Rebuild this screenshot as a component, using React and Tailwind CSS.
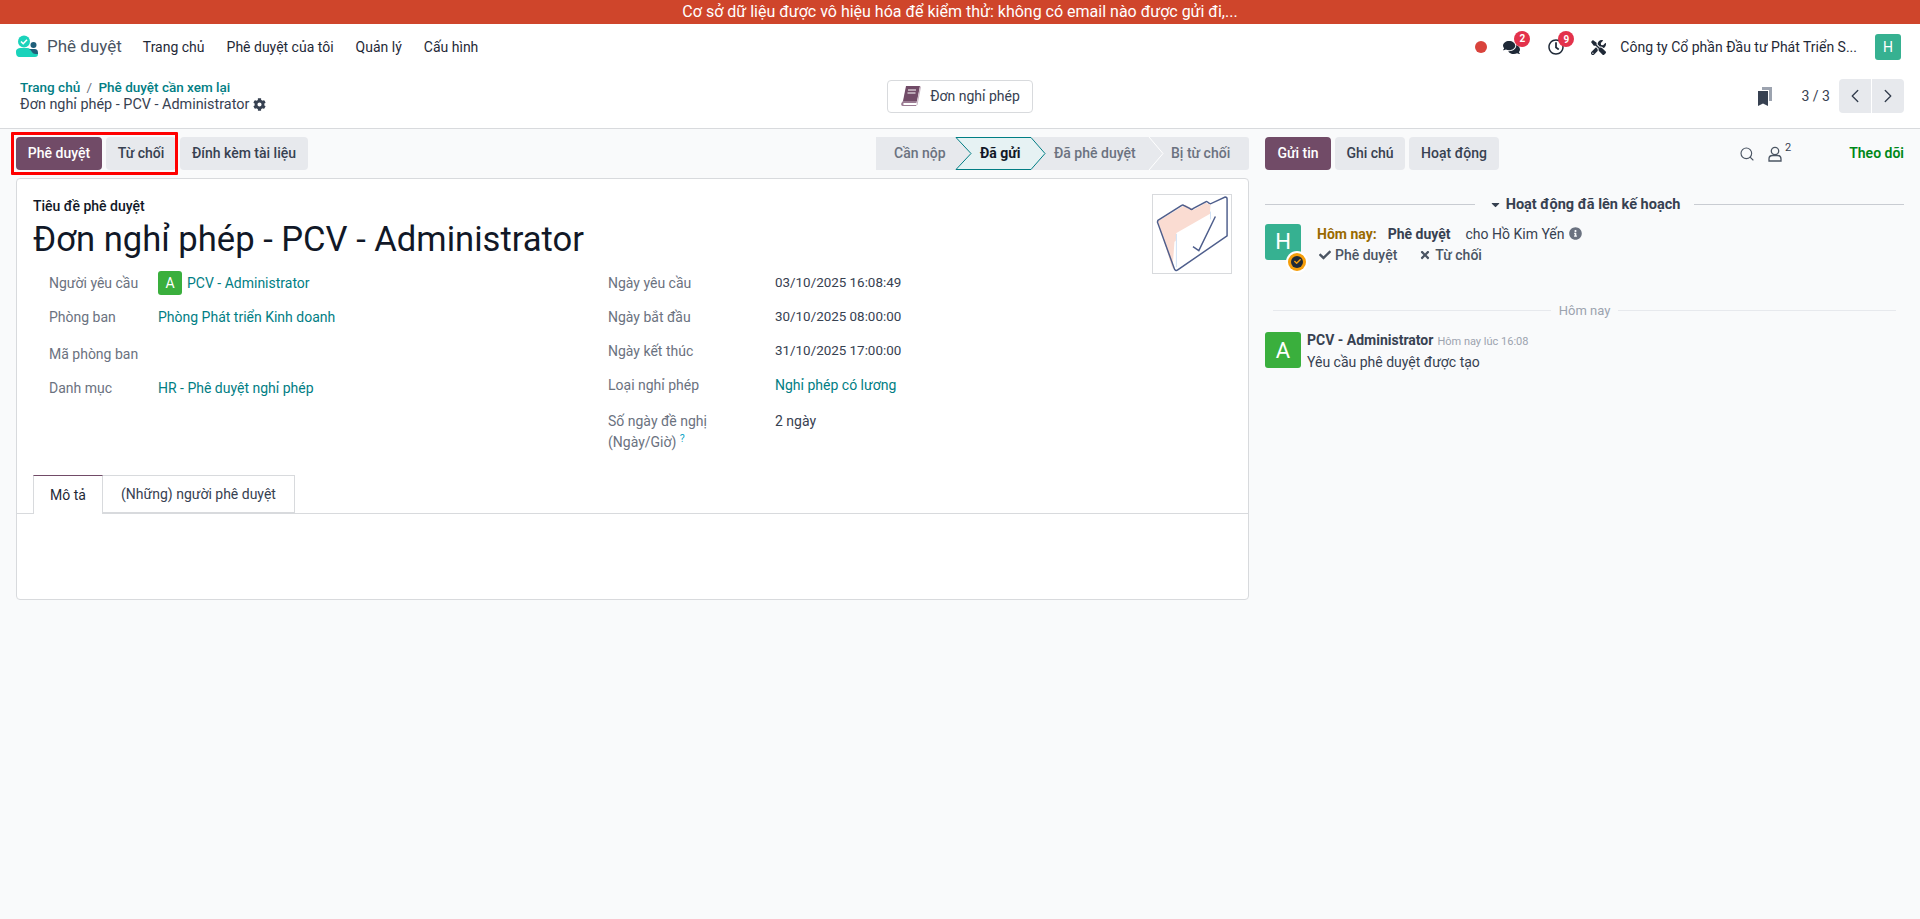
import { FaComments, FaRegClock, FaTools, FaCog, FaCheck, FaTimes, FaInfoCircle, FaCaretDown } from 'react-icons/fa';
import { ChevronLeft, ChevronRight, Search } from 'lucide-react';

const Logo = () => (
  <svg width="24" height="24" viewBox="0 0 24 24" className="shrink-0">
    <path d="M1 17c0-3 2-4 5-4h6c3 0 4 2 5 3 1 2 3 2 6 2v1c0 2-1 3-3 3H5c-3 0-4-2-4-5z" fill="#1ad3bb" />
    <path d="M14 14h5c3 0 4 1 4 4v1c-3 0-5 0-6-2-1-1-1-2-3-3z" fill="#1f5f7a" />
    <circle cx="18.5" cy="10" r="3" fill="#1f5f7a" />
    <circle cx="9" cy="6.5" r="6" fill="#1ad3bb" />
    <path d="M6 6.5l2.2 2.2L12 4.8" fill="none" stroke="#fff" strokeWidth="1.6" />
  </svg>
);

const BookIcon = () => (
  <svg width="22" height="22" viewBox="0 0 22 22">
    <path d="M6 1h14l-3 15H3z" fill="#714b67" />
    <path d="M3 16h14l-.6 2H4c-1 0-1 2 0 2h12.5l-.4 1H3c-2 0-2-2-1.600-3z" fill="#9b7c93" />
    <path d="M20 1l1 1-3.500 18h-1l3-16z" fill="#c9b8c4" />
    <path d="M8 5h8M7.500 8h8" stroke="#fff" strokeWidth="1.200" />
  </svg>
);

const Bookmarks = () => (
  <svg width="14" height="19" viewBox="0 0 14 19">
    <path d="M4 0h10v14H11V3H4z" fill="#9ca3af" />
    <path d="M0 4h10v15l-5-2.500L0 19z" fill="#374151" />
  </svg>
);

const FolderImg = () => (
  <svg width="76" height="76" viewBox="0 0 78 78">
    <path d="M4 26l28-17 9 5 12-7 5 2-1 17-36 21-2 28z" fill="#fadcd2" />
    <path d="M23 38l35-20 0-4 14-8c2-1 3 0 3 2v36L24 76c-2 1-3 0-4-2z" fill="#fff" />
    <path d="M4 25L28 10c1-1 2-1 3 0l6 3c1 1 2 1 3 0l13-7c1-1 2 0 3 1l2 1 15-7c1 0 2 0 2 2v38L24 76c-1 1-3 0-3-1L4 28c-1-1 0-2 0-3z" fill="none" stroke="#4e5e8c" strokeWidth="1.500" />
    <path d="M40 52l6 4 17-35" fill="none" stroke="#4e5e8c" strokeWidth="1.500" />
    <path d="M23 39v34M58 16v8" stroke="#cfe0f5" strokeWidth="1" />
  </svg>
);

const UserOutline = () => (
  <svg width="14" height="16" viewBox="0 0 14 16" fill="none" stroke="#4b5563" strokeWidth="1.300">
    <circle cx="7" cy="5" r="3.700" />
    <path d="M1 15v-2c0-2 1.500-3.500 3.500-3.500h5c2 0 3.500 1.500 3.500 3.500v2z" />
  </svg>
);

const Avatar = ({ letter, color, size }) => (
  <div className={`flex shrink-0 items-center justify-center rounded-[3px] text-white ${color} ${size}`}>
    {letter}
  </div>
);

const Badge = ({ count }) => (
  <span className="absolute -top-[8px] -right-[10px] flex h-[16px] w-[16px] items-center justify-center rounded-full bg-[#e3324b] text-[10px] font-bold text-white">
    {count}
  </span>
);

const Field = ({ label, height, children }) => (
  <div className={`flex items-center ${height}`}>
    <div className="w-[109px] shrink-0 text-[#6b7280]">{label}</div>
    {children}
  </div>
);

const DateField = ({ label, height, children }) => (
  <div className={`flex items-center ${height}`}>
    <div className="w-[167px] shrink-0 text-[#6b7280]">{label}</div>
    {children}
  </div>
);

const App = () => {
  return (
    <div className="flex h-[919px] flex-col overflow-hidden bg-[#f9fafb] font-['Roboto','Liberation_Sans',sans-serif] text-[14px] text-[#374151]">
      <div className="flex h-[24px] shrink-0 items-center justify-center bg-[#cf452b] text-[16px] text-white">
        Cơ sở dữ liệu được vô hiệu hóa để kiểm thử: không có email nào được gửi đi,...
      </div>

      <nav className="flex h-[46px] shrink-0 items-center bg-white pl-[15px] pr-[19px]">
        <Logo />
        <span className="ml-[8px] text-[17px] text-[#4b5563]">Phê duyệt</span>
        <div className="ml-[21px] flex gap-[22px] text-[#1f2937]">
          <span>Trang chủ</span>
          <span>Phê duyệt của tôi</span>
          <span>Quản lý</span>
          <span>Cấu hình</span>
        </div>
        <div className="ml-auto flex items-center">
          <span className="h-[12px] w-[12px] rounded-full bg-[#d9433c]" />
          <span className="relative ml-[16px] text-[#1f2937]">
            <FaComments size={17} />
            <Badge count="2" />
          </span>
          <span className="relative ml-[28px] text-[#1f2937]">
            <FaRegClock size={16} />
            <Badge count="9" />
          </span>
          <span className="ml-[27px] text-[#1f2937]"><FaTools size={15} /></span>
          <span className="ml-[14px] text-[#1f2937]">Công ty Cổ phần Đầu tư Phát Triển S...</span>
          <Avatar letter="H" color="bg-[#36b191]" size="ml-[18px] h-[26px] w-[26px]" />
        </div>
      </nav>

      <div className="flex h-[59px] shrink-0 items-center border-b border-[#d8dadd] bg-white pb-[6px] pl-[20px] pr-[16px]">
        <div className="w-[867px] leading-[17px]">
          <div className="text-[13.500px] font-medium text-[#017e84]">
            Trang chủ <span className="mx-[3px] font-normal text-[#6b7280]">/</span> Phê duyệt cần xem lại
          </div>
          <div className="flex items-center gap-[4px] text-[14.400px]">
            Đơn nghỉ phép - PCV - Administrator <FaCog size={13} />
          </div>
        </div>
        <button className="flex h-[33px] w-[146px] items-center justify-center gap-[8px] rounded-[4px] border border-[#d8dadd] bg-white">
          <BookIcon />
          Đơn nghỉ phép
        </button>
        <div className="ml-auto flex items-center">
          <Bookmarks />
          <span className="ml-[30px]">3 / 3</span>
          <div className="ml-[9px] flex h-[34px] w-[65px] overflow-hidden rounded-[4px] bg-[#e7e9ed]">
            <span className="flex flex-1 items-center justify-center border-r border-white"><ChevronLeft size={22} strokeWidth={1.5} /></span>
            <span className="flex flex-1 items-center justify-center"><ChevronRight size={22} strokeWidth={1.5} /></span>
          </div>
        </div>
      </div>

      <div className="flex min-h-0 flex-1">
        <div className="w-[1265px] shrink-0 pl-[16px] pr-[16px]">
          <div className="flex h-[49px] items-center">
            <div className="flex h-[33px] gap-[4px] font-medium">
              <div className="relative flex gap-[4px]">
                <button className="w-[86px] rounded-[4px] bg-[#714b67] text-white">Phê duyệt</button>
                <button className="w-[70px] rounded-[4px] bg-[#e7e9ed]">Từ chối</button>
                <span className="absolute -left-[5px] -top-[5px] h-[43px] w-[167px] rounded-[1px] border-[3px] border-[#ff0000]" />
              </div>
              <button className="w-[128px] rounded-[4px] bg-[#e7e9ed]">Đính kèm tài liệu</button>
            </div>
            <div className="relative ml-auto flex h-[33px] w-[373px] items-center overflow-hidden rounded-r-[3px] bg-[#e7e9ed] font-medium text-[#6b7280]">
              <svg width="372" height="33" viewBox="0 0 372 33" className="absolute left-[1px] top-0">
                <path d="M79 0.500H154L168 16.500L154 32.500H79L94 16.500z" fill="#e6f2f3" stroke="#017e84" />
                <path d="M272 0L286 16.500L272 33" fill="none" stroke="#ffffff" />
              </svg>
              <span className="relative ml-[18px] w-[86px]">Cần nộp</span>
              <span className="relative w-[74px] font-bold text-[#111827]">Đã gửi</span>
              <span className="relative w-[117px]">Đã phê duyệt</span>
              <span className="relative">Bị từ chối</span>
            </div>
          </div>

          <div className="h-[422px] rounded-[4px] border border-[#d8dadd] bg-white">
            <div className="relative h-[296px] pl-[16px] pt-[16px]">
              <div className="text-[14px] font-medium leading-[23px] text-[#111827]">Tiêu đề phê duyệt</div>
              <h1 className="text-[34.600px] leading-[42px] text-[#111827]">Đơn nghỉ phép - PCV - Administrator</h1>
              <div className="absolute right-[16px] top-[15px] border border-[#d8dadd] bg-white p-px">
                <FolderImg />
              </div>
              <div className="mt-[6px] flex pl-[16px]">
                <div className="w-[559px]">
                  <Field label="Người yêu cầu" height="h-[34px]">
                    <Avatar letter="A" color="bg-[#3aaf3d]" size="h-[24px] w-[24px]" />
                    <span className="ml-[5px] text-[#017e84]">PCV - Administrator</span>
                  </Field>
                  <Field label="Phòng ban" height="h-[34px]">
                    <span className="text-[#017e84]">Phòng Phát triển Kinh doanh</span>
                  </Field>
                  <Field label="Mã phòng ban" height="mt-[3px] h-[34px]" />
                  <Field label="Danh mục" height="h-[34px]">
                    <span className="text-[#017e84]">HR - Phê duyệt nghỉ phép</span>
                  </Field>
                </div>
                <div>
                  <DateField label="Ngày yêu cầu" height="h-[34px]"><span className="text-[13.400px]">03/10/2025 16:08:49</span></DateField>
                  <DateField label="Ngày bắt đầu" height="h-[34px]"><span className="text-[13.400px]">30/10/2025 08:00:00</span></DateField>
                  <DateField label="Ngày kết thúc" height="h-[34px]"><span className="text-[13.400px]">31/10/2025 17:00:00</span></DateField>
                  <DateField label="Loại nghỉ phép" height="h-[34px]">
                    <span className="text-[#017e84]">Nghỉ phép có lương</span>
                  </DateField>
                  <div className="mt-[9px] flex leading-[21px]">
                    <div className="w-[167px] shrink-0 text-[#6b7280]">
                      Số ngày đề nghị<br />(Ngày/Giờ) <sup className="text-[#0ea5c6]">?</sup>
                    </div>
                    2 ngày
                  </div>
                </div>
              </div>
            </div>
            <div className="flex h-[39px] border-b border-[#d8dadd] pl-[16px]">
              <span className="flex h-[39px] w-[70px] items-center justify-center border border-b-0 border-[#d8dadd] border-t-[#714b67] bg-white text-[#1f2937]">Mô tả</span>
              <span className="flex h-[38px] w-[192px] items-center justify-center border border-l-0 border-[#d8dadd]">(Những) người phê duyệt</span>
            </div>
          </div>
        </div>

        <div className="flex-1 pr-[16px]">
          <div className="flex h-[49px] items-center font-medium">
            <button className="h-[33px] w-[66px] rounded-[4px] bg-[#714b67] text-white">Gửi tin</button>
            <button className="ml-[4px] h-[33px] w-[70px] rounded-[4px] bg-[#e7e9ed]">Ghi chú</button>
            <button className="ml-[4px] h-[33px] w-[90px] rounded-[4px] bg-[#e7e9ed]">Hoạt động</button>
            <span className="ml-[240px] text-[#4b5563]"><Search size={16} strokeWidth={1.7} /></span>
            <span className="ml-[13px]"><UserOutline /></span>
            <sup className="ml-[3px] text-[11px] font-normal">2</sup>
            <span className="ml-auto font-semibold text-[#008818]">Theo dõi</span>
          </div>

          <div className="mt-[16px] flex items-center">
            <div className="h-px flex-1 bg-[#c9ccd2]" />
            <span className="mx-[14px] flex items-center gap-[4px] text-[14.500px] font-bold text-[#374151]">
              <FaCaretDown size={13} />
              Hoạt động đã lên kế hoạch
            </span>
            <div className="h-px flex-1 bg-[#c9ccd2]" />
          </div>

          <div className="mt-[8px] flex">
            <div className="relative">
              <Avatar letter="H" color="bg-[#36b191]" size="h-[36px] w-[36px] text-[22px]" />
              <span className="absolute -bottom-[5px] -right-[5px] flex h-[18px] w-[18px] items-center justify-center rounded-full bg-[#f59e0b] ring-2 ring-white">
                <span className="flex h-[12px] w-[12px] items-center justify-center rounded-full bg-[#1f2937] text-[#f59e0b]"><FaCheck size={7} /></span>
              </span>
            </div>
            <div className="ml-[16px]">
              <div className="flex items-center leading-[20px]">
                <span className="font-bold text-[#9a6a00]">Hôm nay:</span>
                <span className="ml-[11px] font-bold">Phê duyệt</span>
                <span className="ml-[15px]">cho Hồ Kim Yến</span>
                <span className="ml-[4px] text-[#6b7280]"><FaInfoCircle size={13} /></span>
              </div>
              <div className="mt-[1px] flex items-center font-medium text-[#4b5563]">
                <FaCheck size={12} className="ml-[2px]" />
                <span className="ml-[4px]">Phê duyệt</span>
                <FaTimes size={12} className="ml-[22px]" />
                <span className="ml-[4px]">Từ chối</span>
              </div>
            </div>
          </div>

          <div className="mx-[8px] mt-[35px] flex items-center text-[13px] text-[#9ca3af]">
            <div className="h-px flex-1 bg-[#e7e9ed]" />
            <span className="mx-[8px]">Hôm nay</span>
            <div className="h-px flex-1 bg-[#e7e9ed]" />
          </div>

          <div className="mt-[12px] flex">
            <Avatar letter="A" color="bg-[#3aaf3d]" size="h-[36px] w-[36px] text-[22px]" />
            <div className="ml-[6px]">
              <div className="leading-[17px]">
                <span className="font-bold">PCV - Administrator</span>
                <span className="ml-[4px] text-[11px] text-[#9ca3af]">Hôm nay lúc 16:08</span>
              </div>
              <div className="mt-[2px]">Yêu cầu phê duyệt được tạo</div>
            </div>
          </div>
        </div>
      </div>
    </div>
  );
};

export default App;
